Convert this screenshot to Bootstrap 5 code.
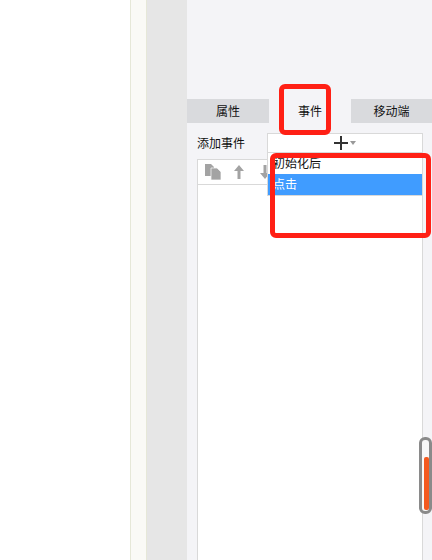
<!DOCTYPE html>
<html lang="zh">
<head>
  <meta charset="UTF-8" />
  <title>事件</title>
  <link href="https://cdn.jsdelivr.net/npm/bootstrap@5.3.0/dist/css/bootstrap.min.css" rel="stylesheet"/>
  <style>
    html, body { width: 432px; height: 560px; overflow: hidden; }
    body { font-family: "Liberation Sans", "Noto Sans CJK SC", sans-serif; font-size: 12px; line-height: 16px; color: #111; background: #fff; }
    .page-blank { width: 130px; }
    .page-strip { width: 17px; background: #fafaf6; border-left: 1px solid #e6e8d8; border-right: 1px solid #e6e8d8; }
    .page-gutter { width: 40px; background: #e6e6e6; }
    .side-panel { width: 245px; background: #f4f4f7; padding-top: 99px; }
    .tab-item { width: 82px; height: 24px; padding-top: 1px; background: #d9dadd; }
    .tab-item.is-active { background: transparent; }
    .tab-item:last-child { width: 81px; }
    .event-area { padding: 10px 9px 0 10px; }
    .add-row { height: 26px; }
    .add-label { width: 70px; padding-top: 3px; }
    .add-btn { width: 156px; height: 20px; background: #fff; border: 1px solid #d9d9d9; font-size: 0; gap: 2px; }
    .event-box { width: 226px; height: 410px; background: #fff; border: 1px solid #d9d9d9; }
    .event-tools { height: 25px; padding: 0 7px; border-bottom: 1px solid #d9d9d9; }
    .tool-up { margin-left: 13px; }
    .tool-down { margin-left: 16px; }
    .drop-menu { position: absolute; left: 267px; top: 153px; width: 156px; height: 43px; background: #fff; border: 1px solid #d9d9d9; border-top: 0; }
    .drop-row { height: 21px; padding-left: 5px; padding-top: 1px; line-height: 21px; }
    .drop-row.is-picked { background: #409cff; color: #fff; }
    .mark-tab { position: absolute; left: 279px; top: 84px; width: 52px; height: 51px; border: 5px solid #ff2015; border-radius: 6px; }
    .mark-menu { position: absolute; left: 270px; top: 153px; width: 161px; height: 85px; border: 5px solid #ff2015; border-radius: 6px; }
    .scroll-ring { position: absolute; left: 419px; top: 437px; width: 13px; height: 77px; border: 3px solid #8a8a8a; border-radius: 6px; background: #f8f8f8; }
    .scroll-fill { position: absolute; left: 424px; top: 457px; width: 5px; height: 53px; background: #f4591f; border-radius: 2px; }
  </style>
</head>
<body>
  <div class="d-flex h-100">
    <div class="page-blank"></div>
    <div class="page-strip"></div>
    <div class="page-gutter"></div>
    <div class="side-panel">
      <div class="d-flex">
        <div class="tab-item d-flex align-items-center justify-content-center">属性</div>
        <div class="tab-item is-active d-flex align-items-center justify-content-center">事件</div>
        <div class="tab-item d-flex align-items-center justify-content-center">移动端</div>
      </div>
      <div class="event-area">
        <div class="add-row d-flex align-items-start">
          <div class="add-label">添加事件</div>
          <div class="add-btn d-flex align-items-center justify-content-center">
            <svg width="14" height="14" viewBox="0 0 14 14"><path d="M0 6h14v2H0zM6 0h2v14H6z" fill="#333"/></svg>
            <svg width="6" height="4" viewBox="0 0 6 4"><path d="M0 0h6L3 4z" fill="#999"/></svg>
          </div>
        </div>
        <div class="event-box">
          <div class="event-tools d-flex align-items-center">
            <svg width="16" height="16" viewBox="0 0 16 16"><path d="M0 0h6l3 3v9H0z" fill="#a3a3a3"/><path d="M6 4h6l4 4v8H6z" fill="#a3a3a3" stroke="#f4f4f4" stroke-width=".8"/></svg>
            <svg class="tool-up" width="10" height="14" viewBox="0 0 10 14"><path d="M5 0l5 6H6.500v8h-3V6H0z" fill="#a3a3a3"/></svg>
            <svg class="tool-down" width="10" height="14" viewBox="0 0 10 14"><path d="M3.500 0h3v8H10l-5 6-5-6h3.500z" fill="#a3a3a3"/></svg>
          </div>
        </div>
      </div>
    </div>
  </div>

  <div class="drop-menu">
    <div class="drop-row">初始化后</div>
    <div class="drop-row is-picked">点击</div>
  </div>
  <div class="mark-tab"></div>
  <div class="mark-menu"></div>
  <div class="scroll-ring"></div>
  <div class="scroll-fill"></div>
</body>
</html>
